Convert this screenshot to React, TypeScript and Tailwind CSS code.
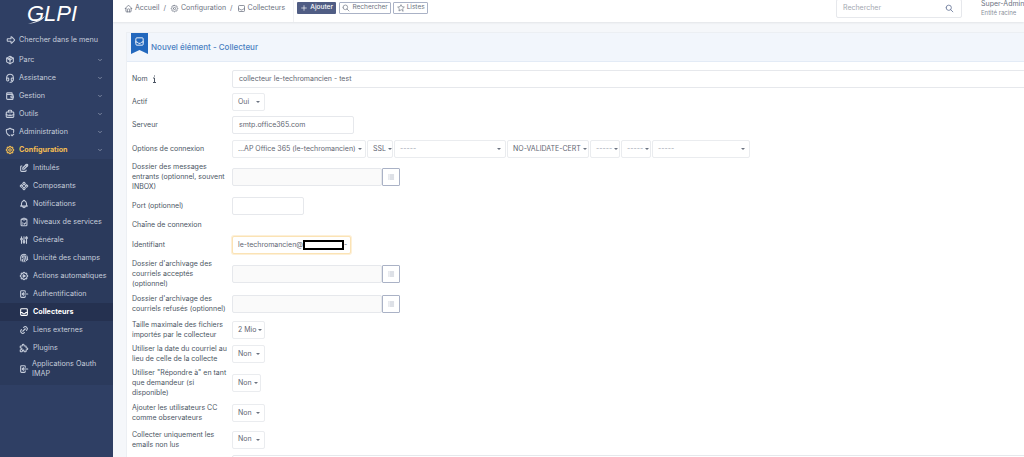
import React from 'react';
import {
  TbArrowBigRight, TbPackage, TbHeadset, TbWallet, TbBriefcase, TbShieldCheck, TbSettings, TbChevronDown,
  TbEdit, TbComponents, TbBell, TbCheckupList, TbAdjustments, TbFingerprint, TbSettingsAutomation,
  TbLogin, TbInbox, TbLink, TbPuzzle, TbHome, TbPlus, TbSearch, TbStar, TbList,
} from 'react-icons/tb';

const topMenu = [
  { label: 'Parc', icon: TbPackage },
  { label: 'Assistance', icon: TbHeadset },
  { label: 'Gestion', icon: TbWallet },
  { label: 'Outils', icon: TbBriefcase },
  { label: 'Administration', icon: TbShieldCheck },
];

const subMenu = [
  { label: 'Intitulés', icon: TbEdit },
  { label: 'Composants', icon: TbComponents },
  { label: 'Notifications', icon: TbBell },
  { label: 'Niveaux de services', icon: TbCheckupList },
  { label: 'Générale', icon: TbAdjustments },
  { label: 'Unicité des champs', icon: TbFingerprint },
  { label: 'Actions automatiques', icon: TbSettingsAutomation },
  { label: 'Authentification', icon: TbLogin },
  { label: 'Collecteurs', icon: TbInbox, active: true },
  { label: 'Liens externes', icon: TbLink },
  { label: 'Plugins', icon: TbPuzzle },
];

const Sidebar = () => (
  <aside className="w-[113px] shrink-0 h-full bg-[#2f3f64] text-[#c6cddb] text-[7.2px] overflow-hidden">
    <div className="h-[31px] flex items-center pl-[27px] relative">
      <span className="text-white italic text-[22px] leading-none font-['Liberation_Sans',sans-serif] -mt-[4px]">GLPI</span>
      <svg className="absolute left-[28px] top-[15px]" width="18" height="10" viewBox="0 0 18 10">
        <path d="M0 9 C6 7 12 5 17 1 C14 6 8 8 0 9Z" fill="#dfe3ea" />
      </svg>
    </div>
    <div className="h-[18px] flex items-center pl-[6px]">
      <TbArrowBigRight className="w-[10px] h-[10px] mr-[3px]" strokeWidth={2.6} />
      <span>Chercher dans le menu</span>
    </div>
    <div className="h-[2px]" />
    {topMenu.map(({ label, icon: Icon }) => (
      <div key={label} className="h-[18px] flex items-center pl-[5px] pr-[10px]">
        <Icon className="w-[10px] h-[10px] mr-[4px]" strokeWidth={2.6} />
        <span className="flex-1">{label}</span>
        <TbChevronDown className="w-[6px] h-[6px]" />
      </div>
    ))}
    <div className="h-[18px] flex items-center pl-[5px] pr-[10px] text-[#f3bd52] font-bold">
      <TbSettings className="w-[10px] h-[10px] mr-[4px]" strokeWidth={2.6} />
      <span className="flex-1">Configuration</span>
      <TbChevronDown className="w-[6px] h-[6px] text-[#c6cddb]" />
    </div>
    <div className="bg-[#2b3a5c] h-[226px]">
      {subMenu.map(({ label, icon: Icon, active }) => (
        <div key={label} className={`h-[18px] flex items-center pl-[19px] ${active ? 'bg-[#253150] text-white font-bold' : ''}`}>
          <Icon className="w-[10px] h-[10px] mr-[4px]" strokeWidth={2.6} />
          <span>{label}</span>
        </div>
      ))}
      <div className="h-[24px] flex items-center pl-[19px]">
        <TbLogin className="w-[10px] h-[10px] mr-[3px]" strokeWidth={2.6} />
        <span className="leading-[10px]">Applications Oauth<br />IMAP</span>
      </div>
    </div>
  </aside>
);

const Header = () => (
  <header className="h-[22px] bg-white shadow-[0_1px_2px_rgba(0,0,0,0.08)] flex items-center text-[7px] text-[#6b7280] pl-[11px] pb-[6px] shrink-0">
    <TbHome className="w-[9px] h-[9px] mr-[2px]" />
    <span>Accueil</span>
    <span className="mx-[4px]">/</span>
    <TbSettings className="w-[9px] h-[9px] mr-[2px]" />
    <span>Configuration</span>
    <span className="mx-[4px]">/</span>
    <TbInbox className="w-[9px] h-[9px] mr-[2px]" />
    <span>Collecteurs</span>
    <div className="w-px self-stretch -mb-[6px] bg-[#f0f1f3] ml-[8px] mr-[3px]" />
    <button className="h-[12px] w-[39px] bg-[#505d84] text-white text-[6.5px] font-medium flex items-center justify-center rounded-[1px]">
      <TbPlus className="w-[8px] h-[8px] mr-[2px]" />Ajouter
    </button>
    <button className="h-[12px] w-[52px] ml-[3px] border border-[#aab2c6] text-[6.5px] flex items-center justify-center rounded-[1px]">
      <TbSearch className="w-[8px] h-[8px] mr-[2px]" />Rechercher
    </button>
    <button className="h-[12px] w-[35px] ml-[2px] border border-[#aab2c6] text-[6.5px] flex items-center justify-center rounded-[1px]">
      <TbStar className="w-[8px] h-[8px] mr-[2px]" />Listes
    </button>
    <div className="ml-auto w-[126px] h-[19px] border border-[#e6e8ec] rounded-[2px] flex items-center justify-between pl-[6px] pr-[7px] text-[7px] text-[#a3a8b1]">
      <span>Rechercher</span>
      <TbSearch className="w-[9px] h-[9px] text-[#5a6a8f]" />
    </div>
    <div className="w-[43px] ml-[19px] shrink-0 whitespace-nowrap">
      <div className="leading-[9px] text-[7px]">Super-Admin</div>
      <div className="leading-[9px] text-[6px] text-[#8a909b]">Entité racine</div>
    </div>
  </header>
);

const Sel = ({ w, children, dash }: { w: string; children: React.ReactNode; dash?: boolean }) => (
  <div className={`${w} h-[18px] shrink-0 bg-white border border-[#eaecef] rounded-[2px] flex items-center justify-between pl-[5px] pr-[4px] text-[7px] whitespace-nowrap overflow-hidden ${dash ? 'text-[#9ca3af]' : 'text-[#5f6672]'}`}>
    <span>{children}</span>
    <span className="w-0 h-0 border-x-[2px] border-x-transparent border-t-[2px] border-t-[#6b7280] ml-[2px] shrink-0" />
  </div>
);

const Input = ({ w, children, disabled }: { w: string; children?: React.ReactNode; disabled?: boolean }) => (
  <div className={`${w} h-[18px] shrink-0 border border-[#e6e8ec] rounded-[2px] flex items-center pl-[6px] text-[7px] text-[#5f6672] ${disabled ? 'bg-[#fafafa]' : 'bg-white'}`}>
    {children}
  </div>
);

const Picker = () => (
  <div className="flex shrink-0">
    <Input w="w-[150px]" disabled />
    <div className="w-[18px] h-[18px] border border-[#aab2c6] rounded-[1px] flex items-center justify-center bg-white">
      <TbList className="w-[8px] h-[8px] text-[#9aa3b5]" />
    </div>
  </div>
);

const Row = ({ h, label, children }: { h: string; label: React.ReactNode; children?: React.ReactNode }) => (
  <div className={`${h} flex items-center pl-[5px]`}>
    <div className="w-[100px] shrink-0 pr-[2px] text-[7px] leading-[10px] text-[#4b5563]">{label}</div>
    {children}
  </div>
);

const Form = () => (
  <div className="pt-[5px]">
    <Row
      h="h-[24px]"
      label={
        <span className="flex items-center">
          Nom
          <svg className="ml-[4px]" width="5" height="8" viewBox="0 0 5 8">
            <path d="M2.5 0.5v1M1 3h1.5v4M1 7.5h3" stroke="#4b5563" strokeWidth="1" fill="none" />
          </svg>
        </span>
      }
    >
      <Input w="w-[820px]">collecteur le-techromancien - test</Input>
    </Row>
    <Row h="h-[22px]" label="Actif"><Sel w="w-[33px]">Oui</Sel></Row>
    <Row h="h-[24px]" label="Serveur"><Input w="w-[122px]">smtp.office365.com</Input></Row>
    <Row h="h-[24px]" label="Options de connexion">
      <div className="flex gap-px">
        <Sel w="w-[134px]">...AP Office 365 (le-techromancien)</Sel>
        <Sel w="w-[26px]">SSL</Sel>
        <Sel w="w-[112px]" dash>-----</Sel>
        <Sel w="w-[82px]">NO-VALIDATE-CERT</Sel>
        <Sel w="w-[30px]" dash>-----</Sel>
        <Sel w="w-[30px]" dash>-----</Sel>
        <Sel w="w-[98px]" dash>-----</Sel>
      </div>
    </Row>
    <Row h="h-[32px]" label={<>Dossier des messages entrants (optionnel, souvent INBOX)</>}><Picker /></Row>
    <Row h="h-[26px]" label="Port (optionnel)"><Input w="w-[72px]" /></Row>
    <Row h="h-[12px]" label="Chaîne de connexion" />
    <Row h="h-[28px]" label="Identifiant">
      <div className="w-[119px] h-[18px] border border-[#fbe3b5] shadow-[0_0_0_1px_#fdf0d8] rounded-[2px] bg-white flex items-center pl-[5px] text-[7px] text-[#5f6672] whitespace-nowrap">
        le-techromancien@
        <span className="inline-block w-[41px] h-[10px] border-2 border-black bg-white" />
        <span>-</span>
      </div>
    </Row>
    <Row h="h-[30px]" label={<>Dossier d'archivage des courriels acceptés (optionnel)</>}><Picker /></Row>
    <Row h="h-[30px]" label={<>Dossier d'archivage des courriels refusés (optionnel)</>}><Picker /></Row>
    <Row h="h-[22px]" label={<>Taille maximale des fichiers importés par le collecteur</>}><Sel w="w-[33px]">2 Mio</Sel></Row>
    <Row h="h-[26px]" label={<>Utiliser la date du courriel au lieu de celle de la collecte</>}><Sel w="w-[33px]">Non</Sel></Row>
    <Row h="h-[32px]" label={<>Utiliser "Répondre à" en tant que demandeur (si disponible)</>}><Sel w="w-[29px]">Non</Sel></Row>
    <Row h="h-[28px]" label={<>Ajouter les utilisateurs CC comme observateurs</>}><Sel w="w-[33px]">Non</Sel></Row>
    <Row h="h-[25px]" label={<>Collecter uniquement les emails non lus</>}><Sel w="w-[33px]">Non</Sel></Row>
    <div className="pl-[105px] pt-[3px]"><Input w="w-[820px]" /></div>
  </div>
);

export default function App() {
  return (
    <div className="w-[1024px] h-[457px] flex overflow-hidden bg-[#f5f7fa] font-['Inter',sans-serif]">
      <Sidebar />
      <main className="flex-1 min-w-0 flex flex-col">
        <Header />
        <section className="ml-[13px] mt-[10px] flex-1 bg-white border-l border-t border-[#eceff3] overflow-hidden">
          <div className="h-[29px] bg-[#f2f6fc] border-b border-[#e3ebf6] flex items-center relative pl-[24px]">
            <div className="absolute left-[4px] -top-[1px] w-[17px] h-[22px] bg-[#2368bd] flex items-start justify-center pt-[4px] [clip-path:polygon(0_0,100%_0,100%_100%,50%_82%,0_100%)]">
              <TbInbox className="w-[11px] h-[11px] text-white" />
            </div>
            <span className="text-[8px] font-medium text-[#4a7fc1]">Nouvel élément - Collecteur</span>
          </div>
          <Form />
        </section>
      </main>
    </div>
  );
}
